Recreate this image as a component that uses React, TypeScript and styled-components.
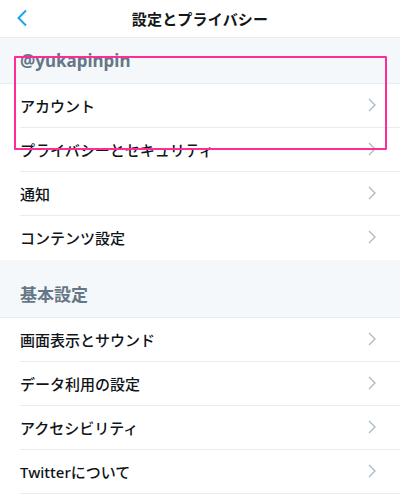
import * as React from 'react';
import styled, { createGlobalStyle } from 'styled-components';

const GlobalStyle = createGlobalStyle`
  html, body {
    margin: 0;
    padding: 0;
    background: #ffffff;
  }
  body {
    font-family: 'Noto Sans', 'Noto Sans CJK JP', sans-serif;
    color: #14171a;
  }
`;

const Page = styled.div`
  position: relative;
  width: 400px;
  height: 495px;
  overflow: hidden;
  background: #ffffff;
`;

const Header = styled.div`
  height: 37px;
  display: flex;
  align-items: center;
  justify-content: center;
  position: relative;
  border-bottom: 1px solid #e6ecf0;
`;

const BackButton = styled.div`
  position: absolute;
  left: 16px;
  top: 8px;
  width: 14px;
  height: 20px;
  display: flex;
  align-items: center;
`;

const Title = styled.div`
  font-family: 'Noto Sans CJK JP', sans-serif;
  font-weight: 700;
  font-size: 15px;
  letter-spacing: 0.2px;
  color: #14171a;
`;

const SectionHeader = styled.div<{ $height: number }>`
  height: ${p => p.$height}px;
  background: #f5f8fa;
  display: flex;
  align-items: flex-end;
  padding: 0 20px 11px;
  box-sizing: border-box;
  border-bottom: 1px solid #e6ecf0;
  font-family: 'Noto Sans', 'Noto Sans CJK JP', sans-serif;
  font-weight: 700;
  font-size: 17px;
  color: #657786;
`;

const List = styled.div`
  display: flex;
  flex-direction: column;
`;

const Row = styled.div`
  height: 44px;
  display: flex;
  align-items: center;
  justify-content: space-between;
  padding: 0 0 2px 20px;
  box-sizing: border-box;
  position: relative;
  &:not(:last-child)::after {
    content: '';
    position: absolute;
    left: 20px;
    right: 0;
    bottom: 0;
    height: 1px;
    background: #e6ecf0;
  }
`;

const RowLabel = styled.span`
  font-family: 'Noto Sans', 'Noto Sans CJK JP', sans-serif;
  font-size: 15px;
  font-weight: 500;
  color: #0f1419;
`;

const Chevron = styled.svg`
  width: 8px;
  height: 14px;
  margin-right: 24px;
`;

const Highlight = styled.div`
  position: absolute;
  left: 14px;
  top: 56px;
  width: 369px;
  height: 90px;
  border: 2px solid #ff2c98;
  border-radius: 1px;
  pointer-events: none;
`;

const ChevronIcon = () => (
  <Chevron viewBox="0 0 8 14">
    <path d="M1 1 L7 7 L1 13" fill="none" stroke="#aab8c2" strokeWidth="1.3" />
  </Chevron>
);

const Item = ({ label }: { label: string }) => (
  <Row>
    <RowLabel>{label}</RowLabel>
    <ChevronIcon />
  </Row>
);

const accountItems = ['アカウント', 'プライバシーとセキュリティ', '通知', 'コンテンツ設定'];
const generalItems = ['画面表示とサウンド', 'データ利用の設定', 'アクセシビリティ', 'Twitterについて'];

const App = () => (
  <Page>
    <GlobalStyle />
    <Header>
      <BackButton>
        <svg width="12" height="18" viewBox="0 0 12 18">
          <path d="M10 1.5 L2.5 9 L10 16.5" fill="none" stroke="#1da1f2" strokeWidth="2" />
        </svg>
      </BackButton>
      <Title>設定とプライバシー</Title>
    </Header>
    <SectionHeader $height={46}>@yukapinpin</SectionHeader>
    <List>
      {accountItems.map(label => (
        <Item key={label} label={label} />
      ))}
    </List>
    <SectionHeader $height={58}>基本設定</SectionHeader>
    <List>
      {generalItems.map(label => (
        <Item key={label} label={label} />
      ))}
      <Row />
    </List>
    <Highlight />
  </Page>
);

export default App;
